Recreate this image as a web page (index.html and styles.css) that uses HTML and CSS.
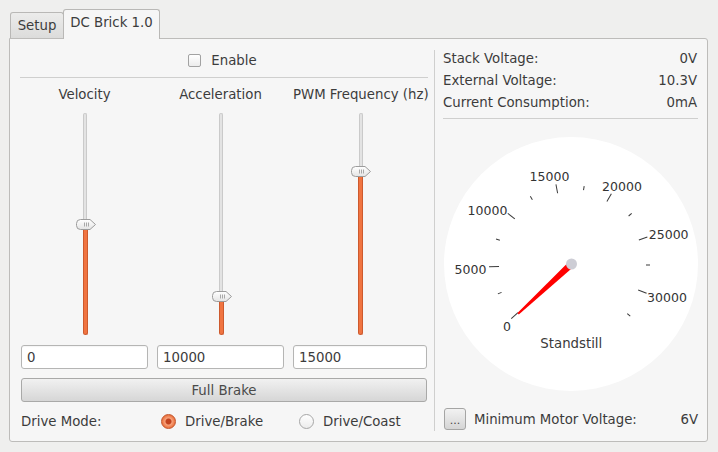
FILE: index.html
```html
<!DOCTYPE html>
<html>
<head>
<meta charset="utf-8">
<link rel="stylesheet" href="styles.css">
</head>
<body>
<div class="window">
  <div class="tabs">
    <div class="tab">Setup</div>
    <div class="tab active">DC Brick 1.0</div>
  </div>
  <div class="pane">
    <div class="left">
      <div class="enable-row"><span class="checkbox"></span><span>Enable</span></div>
      <div class="hsep"></div>
      <div class="controls">
        <div class="ctl-label">Velocity</div>
        <div class="ctl-label">Acceleration</div>
        <div class="ctl-label">PWM Frequency (hz)</div>

        <div class="slider">
          <div class="track">
            <div class="track-empty"></div>
            <div class="track-fill" style="height:110px"></div>
            <svg class="handle" style="bottom:105px" width="20" height="11" viewBox="0 0 20 11"><defs><linearGradient id="hg1" x1="0" y1="0" x2="0" y2="1"><stop offset="0" stop-color="#ffffff"/><stop offset="1" stop-color="#e4e4e4"/></linearGradient></defs><path d="M4.5 0.5H14L19.5 5.5L14 10.5H4.5A4 4 0 0 1 0.5 6.5V4.5A4 4 0 0 1 4.5 0.5Z" fill="url(#hg1)" stroke="#9c9c9c"/><path d="M8.5 3.5v4M10.5 3.5v4M12.5 3.5v4" stroke="#a8a8a8"/></svg>
          </div>
        </div>
        <div class="slider">
          <div class="track">
            <div class="track-empty"></div>
            <div class="track-fill" style="height:38px"></div>
            <svg class="handle" style="bottom:33px" width="20" height="11" viewBox="0 0 20 11"><defs><linearGradient id="hg2" x1="0" y1="0" x2="0" y2="1"><stop offset="0" stop-color="#ffffff"/><stop offset="1" stop-color="#e4e4e4"/></linearGradient></defs><path d="M4.5 0.5H14L19.5 5.5L14 10.5H4.5A4 4 0 0 1 0.5 6.5V4.5A4 4 0 0 1 4.5 0.5Z" fill="url(#hg2)" stroke="#9c9c9c"/><path d="M8.5 3.5v4M10.5 3.5v4M12.5 3.5v4" stroke="#a8a8a8"/></svg>
          </div>
        </div>
        <div class="slider">
          <div class="track">
            <div class="track-empty"></div>
            <div class="track-fill" style="height:164px"></div>
            <svg class="handle" style="bottom:158px" width="20" height="11" viewBox="0 0 20 11"><defs><linearGradient id="hg3" x1="0" y1="0" x2="0" y2="1"><stop offset="0" stop-color="#ffffff"/><stop offset="1" stop-color="#e4e4e4"/></linearGradient></defs><path d="M4.5 0.5H14L19.5 5.5L14 10.5H4.5A4 4 0 0 1 0.5 6.5V4.5A4 4 0 0 1 4.5 0.5Z" fill="url(#hg3)" stroke="#9c9c9c"/><path d="M8.5 3.5v4M10.5 3.5v4M12.5 3.5v4" stroke="#a8a8a8"/></svg>
          </div>
        </div>

        <input class="num" type="text" value="0" readonly>
        <input class="num" type="text" value="10000" readonly>
        <input class="num" type="text" value="15000" readonly>
      </div>
      <button class="brake">Full Brake</button>
      <div class="mode-row">
        <span class="mode-label">Drive Mode:</span>
        <span class="radio-item"><span class="radio checked"></span><span>Drive/Brake</span></span>
        <span class="radio-item"><span class="radio"></span><span>Drive/Coast</span></span>
      </div>
    </div>
    <div class="vsep"></div>
    <div class="right">
      <div class="stat"><span>Stack Voltage:</span><span>0V</span></div>
      <div class="stat"><span>External Voltage:</span><span>10.3V</span></div>
      <div class="stat"><span>Current Consumption:</span><span>0mA</span></div>
      <div class="rsep"></div>
      <svg class="gauge" width="254" height="254" viewBox="0 0 254 254">
        <circle cx="127" cy="127" r="127" fill="#ffffff"/>
        <g transform="translate(127 127)" stroke="#3a3a3a" stroke-width="1">
          <line x1="0" y1="-72" x2="0" y2="-81" transform="rotate(-132.5)"/>
          <line x1="0" y1="-72" x2="0" y2="-82" transform="rotate(-91.9)"/>
          <line x1="0" y1="-72" x2="0" y2="-81" transform="rotate(-51.3)"/>
          <line x1="0" y1="-72" x2="0" y2="-81" transform="rotate(-10.7)"/>
          <line x1="0" y1="-72" x2="0" y2="-81" transform="rotate(29.9)"/>
          <line x1="0" y1="-72" x2="0" y2="-81" transform="rotate(70.5)"/>
          <line x1="0" y1="-72" x2="0" y2="-81" transform="rotate(111.1)"/>
          <line x1="0" y1="-75" x2="0" y2="-79" transform="rotate(-112.2)"/>
          <line x1="0" y1="-75" x2="0" y2="-79" transform="rotate(-71.6)"/>
          <line x1="0" y1="-75" x2="0" y2="-79" transform="rotate(-31)"/>
          <line x1="0" y1="-75" x2="0" y2="-79" transform="rotate(9.6)"/>
          <line x1="0" y1="-75" x2="0" y2="-79" transform="rotate(50.2)"/>
          <line x1="0" y1="-75" x2="0" y2="-79" transform="rotate(90.8)"/>
          <line x1="0" y1="-75" x2="0" y2="-79" transform="rotate(131.4)"/>
        </g>
        <g class="gauge-num" text-anchor="middle">
          <text x="63" y="194.4">0</text>
          <text x="26.5" y="137.4">5000</text>
          <text x="43.5" y="78.4">10000</text>
          <text x="105.5" y="43.7">15000</text>
          <text x="178" y="53.7">20000</text>
          <text x="224.7" y="102.4">25000</text>
          <text x="223" y="165.2">30000</text>
        </g>
        <text class="gauge-caption" x="127.3" y="211.3" text-anchor="middle">Standstill</text>
        <g transform="translate(127.5 127) rotate(-133)">
          <polygon points="-3.5,0 3.5,0 1,-73 -1,-73" fill="#ff0000"/>
        </g>
        <circle cx="127.5" cy="127" r="5.5" fill="#cdcdd5"/>
      </svg>
      <div class="minv">
        <button class="dots">...</button>
        <span class="minv-label">Minimum Motor Voltage:</span>
        <span class="minv-val">6V</span>
      </div>
    </div>
  </div>
</div>
</body>
</html>
```

FILE: styles.css
```css
html, body {
  margin: 0;
  padding: 0;
}
body {
  background: #efefee;
  font-family: "DejaVu Sans", "Liberation Sans", sans-serif;
  font-size: 13.3px;
  color: #3c3c3c;
}
.window {
  width: 718px;
  height: 452px;
  box-sizing: border-box;
  padding: 9px 10px 0 9px;
}
.tabs {
  display: flex;
  align-items: flex-end;
  height: 29px;
  padding-left: 1px;
}
.tab {
  box-sizing: border-box;
  height: 26px;
  width: 54px;
  border: 1px solid #b9b8b6;
  border-bottom: none;
  border-radius: 3px 3px 0 0;
  background: linear-gradient(#ececeb, #dcdcdb);
  display: flex;
  align-items: center;
  justify-content: center;
  padding-bottom: 1px;
}
.tab.active {
  height: 30px;
  width: 97px;
  margin-left: -1px;
  margin-bottom: -1px;
  background: #f6f6f6;
  position: relative;
  z-index: 1;
  padding-bottom: 4px;
}
.pane {
  box-sizing: border-box;
  width: 699px;
  height: 404px;
  border: 1px solid #bdbcba;
  border-radius: 0 3px 3px 3px;
  background: #f6f6f6;
  display: flex;
  padding: 0 9px 0 10px;
}
.left {
  width: 408px;
  display: flex;
  flex-direction: column;
}
.enable-row {
  margin-top: 11px;
  height: 21px;
  display: flex;
  align-items: center;
  justify-content: center;
  gap: 10px;
  padding-right: 3px;
}
.checkbox {
  box-sizing: border-box;
  width: 13px;
  height: 13px;
  border: 1px solid #a2a2a2;
  border-radius: 2px;
  background: linear-gradient(#ffffff, #ececec);
}
.hsep {
  margin-top: 6px;
  height: 1px;
  background: #cfcfce;
}
.controls {
  display: grid;
  grid-template-columns: 127px 127px 134px;
  column-gap: 9px;
  padding: 0 1px;
  margin-top: 8px;
}
.ctl-label {
  height: 18px;
  line-height: 18px;
  text-align: center;
  white-space: nowrap;
}
.slider {
  margin-top: 9px;
  height: 222px;
  display: flex;
  justify-content: center;
}
.track {
  position: relative;
  width: 5px;
  height: 100%;
  display: flex;
  flex-direction: column;
  align-items: center;
  margin-left: 1px;
}
.track-empty {
  flex: 1;
  box-sizing: border-box;
  width: 4px;
  background: #e3e3e3;
  border: 1px solid #cacaca;
  border-bottom: none;
  border-radius: 2px 2px 0 0;
}
.track-fill {
  box-sizing: border-box;
  width: 5px;
  background: #f07441;
  border: 1px solid #cd5a2e;
  border-top: none;
  border-radius: 0 0 3px 3px;
}
.handle {
  position: absolute;
  left: -7px;
  display: block;
}
.num {
  margin-top: 10px;
  box-sizing: border-box;
  width: 100%;
  height: 24px;
  border: 1px solid #b5b5b4;
  border-radius: 3px;
  background: #ffffff;
  font: inherit;
  color: #3c3c3c;
  padding: 0 5px;
  outline: none;
  box-shadow: inset 0 1px 1px rgba(0, 0, 0, 0.04);
}
.brake {
  margin: 9px 1px 0 1px;
  box-sizing: border-box;
  height: 24px;
  border: 1px solid #a9a9a8;
  border-radius: 3px;
  background: linear-gradient(#f1f1f1, #d6d6d6);
  font: inherit;
  color: #4a4a4a;
  padding: 0;
}
.mode-row {
  margin-top: 9px;
  height: 20px;
  display: grid;
  grid-template-columns: 140px 138px 1fr;
  align-items: center;
  padding-left: 1px;
}
.radio-item {
  display: flex;
  align-items: center;
  gap: 9px;
}
.radio {
  box-sizing: border-box;
  width: 15px;
  height: 15px;
  border-radius: 50%;
  border: 1px solid #a6a6a6;
  background: linear-gradient(#ffffff, #ececec);
  display: flex;
  align-items: center;
  justify-content: center;
}
.radio.checked {
  border-color: #c15127;
  background: radial-gradient(circle, #c2431f 0, #c2431f 2.5px, #f6a27c 3.5px, #ee7a48 6px);
}
.vsep {
  width: 1px;
  margin: 11px 8px 10px 6px;
  background: #cfcfce;
}
.right {
  width: 255px;
  display: flex;
  flex-direction: column;
}
.stat {
  height: 22px;
  display: flex;
  align-items: center;
  justify-content: space-between;
  padding-right: 1px;
}
.stat:first-child {
  margin-top: 8px;
}
.rsep {
  margin-top: 5px;
  height: 1px;
  background: #cfcfce;
}
.gauge {
  display: block;
  margin-top: 18px;
  margin-left: 1px;
}
.gauge-num {
  font-family: "DejaVu Sans", sans-serif;
  font-size: 12.5px;
  fill: #333333;
}
.gauge-caption {
  font-family: "DejaVu Sans", sans-serif;
  font-size: 13.3px;
  fill: #3a3a3a;
}
.minv {
  margin-top: 17px;
  display: flex;
  align-items: center;
  padding-left: 1px;
}
.dots {
  box-sizing: border-box;
  width: 22px;
  height: 22px;
  border: 1px solid #a5a5a4;
  border-radius: 3px;
  background: linear-gradient(#f2f2f2, #d5d5d5);
  font: inherit;
  font-size: 11px;
  color: #444444;
  padding: 3px 0 0 0;
}
.minv-label {
  margin-left: 8px;
}
.minv-val {
  margin-left: auto;
}
```
